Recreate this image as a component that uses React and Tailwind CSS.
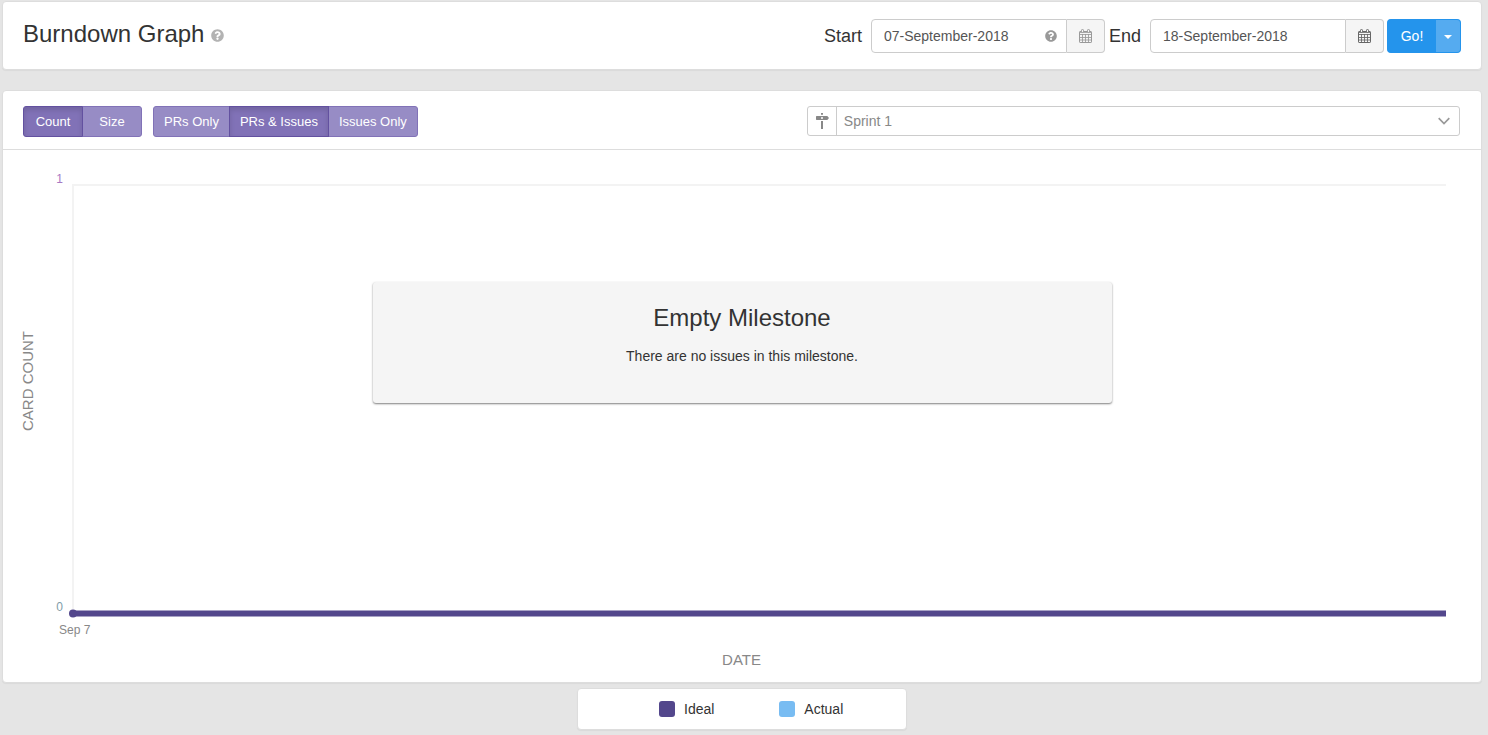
import { useState } from 'react';
import { FaQuestionCircle } from 'react-icons/fa';

function CalendarIcon() {
  return (
    <svg viewBox="0 0 13 14" className="h-[14px] w-[13px]" fill="none" stroke="currentColor" aria-hidden="true">
      <rect x=".5" y="2.500" width="12" height="11" rx=".6" />
      <path d="M3.500 5v8M6.500 5v8M9.500 5v8M1 5.500h11M1 8.500h11M1 11h11" strokeWidth=".85" />
      <path d="M1 3.200h11" strokeWidth="1.200" />
      <rect x="2.500" y=".5" width="2" height="3" rx=".8" fill="#f5f5f5" />
      <rect x="8.500" y=".5" width="2" height="3" rx=".8" fill="#f5f5f5" />
    </svg>
  );
}

function MilestoneIcon() {
  return (
    <svg viewBox="0 0 14 16" className="h-4 w-[14px]" fill="currentColor" fillRule="evenodd" aria-hidden="true">
      <path d="M8 1.800H6V0h2v1.800zM12.300 7H1.500L1 6.500v-3L1.500 3h10.800L14 5l-1.700 2zM8 4.200H6v1.600h2V4.200zM6 16h2V8H6v8z" />
    </svg>
  );
}

function DateField({ id, label, defaultValue, help, iconClass }) {
  return (
    <div className="flex items-center">
      <label htmlFor={id} className="mr-[9px] text-lg leading-5">{label}</label>
      <div className="relative w-[196px]">
        <input
          id={id}
          type="text"
          defaultValue={defaultValue}
          className="block h-[34px] w-full rounded-l border border-[#ccc] bg-white px-3 text-sm text-[#555] outline-none"
        />
        {help && <FaQuestionCircle className="absolute top-[11px] right-[10px] size-3 text-[#999]" />}
      </div>
      <button
        type="button"
        aria-label={`Choose ${label.toLowerCase()} date`}
        className={`flex h-[34px] w-[38px] items-center justify-center rounded-r border border-l-0 border-[#ccc] bg-[#f5f5f5] ${iconClass}`}
      >
        <CalendarIcon />
      </button>
    </div>
  );
}

const segment =
  'relative -ml-px h-[31px] border px-[10px] text-[13px] leading-5 text-white first:ml-0 first:rounded-l-[3px] last:rounded-r-[3px]';
const segmentOn = 'z-10 border-[#6351a0] bg-[#8172b7] shadow-[inset_0_3px_5px_rgba(0,0,0,0.125)]';
const segmentOff = 'border-[#8172b7] bg-[#978cc5]';

function ButtonGroup({ label, options, initial, equal }) {
  const [active, setActive] = useState(initial);
  return (
    <div role="group" aria-label={label} className="flex">
      {options.map((option) => (
        <button
          key={option}
          type="button"
          aria-pressed={active === option}
          onClick={() => setActive(option)}
          className={`${segment} ${equal ? 'w-[60px]' : ''} ${active === option ? segmentOn : segmentOff}`}
        >
          {option}
        </button>
      ))}
    </div>
  );
}

const card = 'rounded border border-[#ddd] bg-white shadow-[0_1px_1px_rgba(0,0,0,0.05)]';

function Chart() {
  return (
    <div className="relative pt-[34px] pr-[35px] pb-3 pl-4">
      <div className="flex h-[430px]">
        <div className="flex w-[18px] items-center justify-center pb-9">
          <span className="rotate-180 text-[15px] leading-[18px] text-[#888] [writing-mode:vertical-rl]">CARD COUNT</span>
        </div>
        <div className="-mt-3 flex w-[26px] flex-col justify-between text-right text-xs leading-[14px]">
          <span className="text-[#a779c4]">1</span>
          <span className="text-[#7f9da8]">0</span>
        </div>
        <svg className="ml-[5px] h-[434px] min-w-0 flex-1 overflow-visible" role="img" aria-label="Burndown chart">
          <path d="M5 0V429" stroke="#f3f3f3" strokeWidth="2" />
          <line x1="4" y1="1" x2="100%" y2="1" stroke="#f3f3f3" strokeWidth="2" />
          <line x1="5" y1="429.5" x2="100%" y2="429.5" stroke="#53478c" strokeWidth="6" />
          <circle cx="5" cy="429.5" r="4" fill="#53478c" />
        </svg>
      </div>
      <div className="mt-2 pl-10 text-xs leading-4 text-[#888]">Sep 7</div>
      <div className="mt-3 pl-[18px] text-center text-[15px] leading-5 text-[#888]">DATE</div>
      <div className="absolute top-[132px] left-1/4 flex w-1/2 flex-col items-center rounded-[3px] bg-[#f5f5f5] pt-5 pb-[37px] text-center shadow-[0_1px_2px_rgba(0,0,0,0.5)]">
        <h2 className="text-2xl leading-8">Empty Milestone</h2>
        <p className="mt-3 text-sm leading-5">There are no issues in this milestone.</p>
      </div>
    </div>
  );
}

export default function App() {
  return (
    <div className="min-h-screen bg-[#e5e5e5] pt-px pr-[6px] pb-[5px] pl-[2px] font-['Liberation_Sans',Arial,sans-serif] text-[#333]">
      <header className={`${card} flex items-start justify-between pt-[17px] pr-5 pb-4 pl-5`}>
        <h1 className="flex items-center text-2xl leading-[30px]">
          Burndown Graph
          <FaQuestionCircle className="mt-[2px] ml-[7px] size-[13px] text-[#b3b3b3]" />
        </h1>
        <form className="flex items-center" onSubmit={(e) => e.preventDefault()}>
          <DateField id="start" label="Start" defaultValue="07-September-2018" help iconClass="text-[#999]" />
          <div className="ml-1">
            <DateField id="end" label="End" defaultValue="18-September-2018" iconClass="text-[#666]" />
          </div>
          <div className="ml-[3px] flex h-[34px]">
            <button type="submit" className="w-[49px] rounded-l border border-r-0 border-[#2494ec] bg-[#2494ec] text-sm text-white">
              Go!
            </button>
            <button type="button" aria-label="More options" className="flex w-[25px] items-center justify-center rounded-r border border-l-0 border-[#2494ec] bg-[#55abf0]">
              <svg viewBox="0 0 8 4" className="mt-[2px] h-1 w-2" fill="#fff" aria-hidden="true">
                <path d="M0 0h8L4 4z" />
              </svg>
            </button>
          </div>
        </form>
      </header>

      <main className={`${card} mt-5`}>
        <div className="flex justify-between border-b border-[#ddd] pt-[15px] pr-[21px] pb-3 pl-5">
          <div className="flex gap-[11px]">
            <ButtonGroup label="Measure" options={['Count', 'Size']} initial="Count" equal />
            <ButtonGroup label="Card types" options={['PRs Only', 'PRs & Issues', 'Issues Only']} initial="PRs & Issues" />
          </div>
          <div className="flex h-[30px] w-5/11 rounded-[3px] border border-[#ccc] text-[#888]">
            <label htmlFor="milestone" aria-label="Milestone" className="flex w-[29px] items-center justify-center border-r border-[#ccc]">
              <MilestoneIcon />
            </label>
            <div className="relative flex-1">
              <select id="milestone" className="block h-full w-full appearance-none bg-transparent pl-[7px] text-sm outline-none">
                <option>Sprint 1</option>
              </select>
              <svg viewBox="0 0 12 8" className="pointer-events-none absolute top-[10px] right-[9px] h-2 w-3" fill="none" stroke="#999" strokeWidth="1.7" aria-hidden="true">
                <path d="M.7 1.2 6 6.5l5.300-5.300" />
              </svg>
            </div>
          </div>
        </div>
        <Chart />
      </main>

      <div className={`${card} mx-auto mt-[5px] flex w-[330px] gap-[65px] py-[10px] pl-[81px] text-sm leading-5`}>
        <div className="flex items-center gap-[9px]">
          <span className="size-4 rounded-[3px] bg-[#53478c]" />
          Ideal
        </div>
        <div className="flex items-center gap-[9px]">
          <span className="size-4 rounded-[3px] bg-[#78bcf2]" />
          Actual
        </div>
      </div>
    </div>
  );
}
